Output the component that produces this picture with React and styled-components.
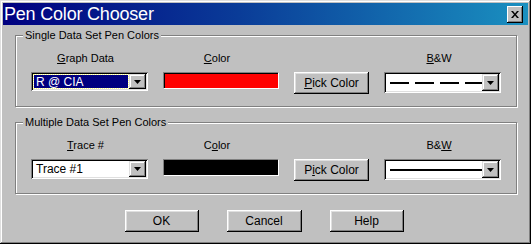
import { styled, createGlobalStyle } from 'styled-components';

const GlobalStyle = createGlobalStyle`
  html, body {
    margin: 0;
    padding: 0;
    background: #c0c0c0;
  }
  * {
    box-sizing: border-box;
  }
`;

const sets = [
  {
    title: 'Single Data Set Pen Colors',
    picker: { label: 'Graph Data', key: 'G', value: 'R @ CIA', selected: true },
    colorKey: 'C',
    color: '#ff0000',
    pickKey: 'P',
    bwKey: 'B',
    dashed: true,
  },
  {
    title: 'Multiple Data Set Pen Colors',
    picker: { label: 'Trace #', key: 'T', value: 'Trace #1', selected: false },
    colorKey: 'o',
    color: '#000000',
    pickKey: 'i',
    bwKey: 'W',
    dashed: false,
  },
];

// underline the mnemonic letter, windows style
function Mnemonic({ text, letter }) {
  const i = text.indexOf(letter);
  if (i < 0) return text;
  return (
    <>
      {text.slice(0, i)}
      <u>{text[i]}</u>
      {text.slice(i + 1)}
    </>
  );
}

function DropArrow() {
  return (
    <svg width="7" height="4" viewBox="0 0 7 4">
      <polygon points="0,0 7,0 3.5,4" fill="#000" />
    </svg>
  );
}

function PenLine({ dashed }) {
  return (
    <svg width="94" height="4" viewBox="0 0 94 4">
      <line
        x1="0"
        y1="2"
        x2="94"
        y2="2"
        stroke="#000"
        strokeWidth="2"
        strokeDasharray={dashed ? '19 6' : 'none'}
      />
    </svg>
  );
}

function PenSet({ set }) {
  return (
    <Group>
      <GroupLabel>{set.title}</GroupLabel>
      <Grid>
        <ColLabel>
          <Mnemonic text={set.picker.label} letter={set.picker.key} />
        </ColLabel>
        <ColLabel>
          <Mnemonic text="Color" letter={set.colorKey} />
        </ColLabel>
        <span />
        <ColLabel>
          <Mnemonic text="B&W" letter={set.bwKey} />
        </ColLabel>

        <Combo $h={set.picker.selected ? 19 : 20}>
          <ComboField>
            <ComboText $selected={set.picker.selected}>{set.picker.value}</ComboText>
          </ComboField>
          <ComboButton>
            <DropArrow />
          </ComboButton>
        </Combo>
        <Swatch $color={set.color} />
        <Button $w={75}>
          <Mnemonic text="Pick Color" letter={set.pickKey} />
        </Button>
        <Combo $h={21}>
          <ComboField>
            <LineBox>
              <PenLine dashed={set.dashed} />
            </LineBox>
          </ComboField>
          <ComboButton>
            <DropArrow />
          </ComboButton>
        </Combo>
      </Grid>
    </Group>
  );
}

export default function App() {
  return (
    <>
      <GlobalStyle />
      <Window>
        <TitleBar>
          <Title>Pen Color Chooser</Title>
          <CloseButton>
            <svg width="8" height="7" viewBox="0 0 8 7">
              <path d="M0 0h2l2 2.5L6 0h2L5 3.5 8 7H6L4 4.5 2 7H0l3-3.5z" fill="#000" />
            </svg>
          </CloseButton>
        </TitleBar>
        <Body>
          {sets.map((s) => (
            <PenSet key={s.title} set={s} />
          ))}
          <ButtonRow>
            <Button $w={74}>OK</Button>
            <Button $w={75}>Cancel</Button>
            <Button $w={74}>Help</Button>
          </ButtonRow>
        </Body>
      </Window>
    </>
  );
}

const Window = styled.div`
  width: 531px;
  height: 244px;
  padding: 3px;
  background: #c0c0c0;
  font-family: 'Liberation Sans', Arial, sans-serif;
  font-size: 11px;
  color: #000;
  box-shadow: inset -1px -1px #000, inset 1px 1px #dfdfdf, inset -2px -2px #808080,
    inset 2px 2px #fff;
  display: flex;
  flex-direction: column;
`;

const TitleBar = styled.div`
  height: 22px;
  display: flex;
  align-items: center;
  justify-content: space-between;
  padding: 0 5px 0 1px;
  background: linear-gradient(to right, #000080 0%, #0a3c98 45%, #1a90c0 100%);
`;

const Title = styled.div`
  color: #fff;
  font-size: 18px;
  letter-spacing: -0.2px;
  line-height: 22px;
`;

const CloseButton = styled.div`
  width: 16px;
  height: 17px;
  background: #c0c0c0;
  display: flex;
  align-items: center;
  justify-content: center;
  box-shadow: inset -1px -1px #000, inset 1px 1px #fff, inset -2px -2px #808080;
`;

const Body = styled.div`
  flex: 1;
  padding: 10px 11px 0 12px;
  display: flex;
  flex-direction: column;
`;

const Group = styled.div`
  position: relative;
  width: 502px;
  border: 1px solid #808080;
  box-shadow: 1px 1px 0 #fff, inset 1px 1px 0 #fff;
  padding: 15px 0 12px 15px;
  margin-bottom: 15px;
`;

const GroupLabel = styled.span`
  position: absolute;
  top: -8px;
  left: 7px;
  padding: 0 2px;
  background: #c0c0c0;
  line-height: 14px;
`;

const Grid = styled.div`
  display: grid;
  grid-template-columns: 117px 116px 75px 118px;
  column-gap: 15px;
  row-gap: 7px;
  align-items: start;
`;

const ColLabel = styled.div`
  text-align: center;
  line-height: 14px;
  padding-right: 8px;
`;

const Combo = styled.div`
  width: 117px;
  height: ${(p) => p.$h}px;
  display: flex;
  padding: 2px;
  background: #fff;
  box-shadow: inset 1px 1px #808080, inset -1px -1px #fff, inset 2px 2px #000,
    inset -2px -2px #dfdfdf;
`;

const ComboField = styled.div`
  flex: 1;
  display: flex;
  align-items: center;
  padding: 1px;
  min-width: 0;
`;

const ComboText = styled.div`
  flex: 1;
  height: 100%;
  display: flex;
  align-items: center;
  padding-left: 2px;
  color: ${(p) => (p.$selected ? '#fff' : '#000')};
  background: ${(p) => (p.$selected ? '#000080' : '#fff')};
  outline: ${(p) => (p.$selected ? '1px dotted #ffff80' : 'none')};
  font-size: 12px;
`;

const LineBox = styled.div`
  flex: 1;
  display: flex;
  align-items: center;
  padding-left: 3px;
`;

const ComboButton = styled.div`
  width: 17px;
  background: #c0c0c0;
  display: flex;
  align-items: center;
  justify-content: center;
  box-shadow: inset -1px -1px #000, inset 1px 1px #dfdfdf, inset -2px -2px #808080,
    inset 2px 2px #fff;
`;

const Swatch = styled.div`
  width: 116px;
  height: 17px;
  background: ${(p) => p.$color};
  border: 1px solid;
  border-color: #808080 #fff #fff #808080;
  box-shadow: inset 1px 1px #000;
`;

const Button = styled.div`
  width: ${(p) => p.$w}px;
  height: 22px;
  display: flex;
  align-items: center;
  justify-content: center;
  background: #c0c0c0;
  font-size: 12px;
  box-shadow: inset -1px -1px #000, inset 1px 1px #fff, inset -2px -2px #808080,
    inset 2px 2px #dfdfdf;
`;

const ButtonRow = styled.div`
  display: flex;
  justify-content: center;
  gap: 28px;
  margin-top: 1px;
  padding-right: 4px;
`;
